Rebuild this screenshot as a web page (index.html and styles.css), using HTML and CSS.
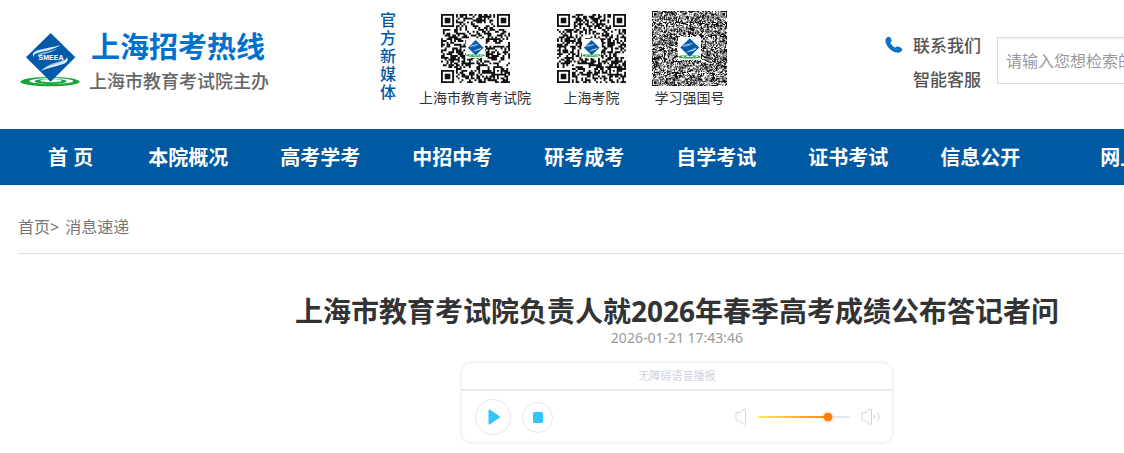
FILE: index.html
```html
<!DOCTYPE html>
<html lang="zh-CN">
<head>
<meta charset="utf-8">
<title>上海招考热线</title>
<link rel="stylesheet" href="styles.css">
</head>
<body>
<svg class="defs" aria-hidden="true">
  <symbol id="emblem" viewBox="60 98 180 166">
    <ellipse cx="150" cy="246" rx="89" ry="14" fill="#18a53a"/>
    <ellipse cx="154" cy="244" rx="66" ry="9" fill="#fff"/>
    <ellipse cx="152" cy="245" rx="48" ry="8" fill="#18a53a"/>
    <ellipse cx="153" cy="243" rx="32" ry="5" fill="#fff"/>
    <path d="M152 100 226 173 152 246 78 173Z" fill="#0459a9"/>
    <path d="M181 136C160 143 139 145 116 151c-14 4-22 12-14 21 -2-8 7-11 18-14 23-6 45-10 61-22Z" fill="#d9ecfa"/>
    <path d="M172 146c-16 8-34 10-50 15-8 3-11 6-9 10 4-5 12-6 20-8 15-3 29-8 39-17Z" fill="#8fbfe4"/>
    <path d="M122 214c20-9 42-12 65-20 15-5 20-13 13-22 0 9-9 11-20 14-23 6-44 14-58 28Z" fill="#d9ecfa"/>
    <path d="M135 205c16-9 34-11 48-17 8-4 9-7 7-10-5 6-12 7-20 10-14 4-27 9-35 17Z" fill="#8fbfe4"/>
  </symbol>
</svg>

<header class="header">
  <a class="brand" href="#">
    <svg class="brand-mark" viewBox="0 0 60 56">
      <use href="#emblem" width="60" height="56"/>
      <text class="emblem-text" x="31" y="28" text-anchor="middle">SMEEA</text>
    </svg>
    <span class="brand-copy">
      <span class="brand-name">上海招考热线</span>
      <span class="brand-host">上海市教育考试院主办</span>
    </span>
  </a>

  <section class="media">
    <h2 class="media-title">官方新媒体</h2>
    <figure class="code">
      <svg class="qr" data-modules="37" data-seed="17" data-inset="3"></svg>
      <figcaption>上海市教育考试院</figcaption>
    </figure>
    <figure class="code">
      <svg class="qr" data-modules="37" data-seed="91" data-inset="3"></svg>
      <figcaption>上海考院</figcaption>
    </figure>
    <figure class="code">
      <svg class="qr" data-modules="81" data-seed="53" data-inset="0"></svg>
      <figcaption>学习强国号</figcaption>
    </figure>
  </section>

  <div class="contact">
    <svg class="phone" viewBox="0 0 18 18" aria-hidden="true"><path d="M1.500 2C3-.3 5 .6 6 2.500c.8 1.600 1 2.500 0 3.600l-.6.700c.9 2 2.500 3.600 4.700 4.900l1.200-.9c1-.7 2-.4 3.200.2 1.800.9 3.400 1.900 2.700 3.300-1 2-3.400 2.700-5.700 2.200C6 15.500.8 9.500.4 4.900.3 3.600.8 2.800 1.500 2Z" fill="#0d72c4"/></svg>
    <div class="contact-links">
      <a href="#">联系我们</a>
      <a href="#">智能客服</a>
    </div>
  </div>

  <form class="search">
    <input class="search-box" type="text" aria-label="检索" placeholder="请输入您想检索的内容">
  </form>
</header>

<nav class="nav">
  <a class="nav-home" href="#">首 页</a>
  <a href="#">本院概况</a>
  <a href="#">高考学考</a>
  <a href="#">中招中考</a>
  <a href="#">研考成考</a>
  <a href="#">自学考试</a>
  <a href="#">证书考试</a>
  <a href="#">信息公开</a>
  <a class="nav-service" href="#">网上服务</a>
</nav>

<main class="content">
  <div class="crumbs"><span><a href="#">首页</a>&gt;</span><a href="#">消息速递</a></div>
  <article class="article">
    <h1 class="title">上海市教育考试院负责人就2026年春季高考成绩公布答记者问</h1>
    <time class="date" datetime="2026-01-21T17:43:46">2026-01-21 17:43:46</time>
    <section class="player">
      <div class="player-title">无障碍语音播报</div>
      <div class="player-bar">
        <button class="round play" type="button" aria-label="播放">
          <svg viewBox="0 0 12 16" width="12" height="16"><path d="M1.500 1.500v13L11 8Z" fill="#33c3ff" stroke="#33c3ff" stroke-width="2" stroke-linejoin="round"/></svg>
        </button>
        <button class="round stop" type="button" aria-label="停止">
          <svg viewBox="0 0 10 11" width="10" height="11"><rect width="10" height="11" rx="1.500" fill="#33c3ff"/></svg>
        </button>
        <div class="volume">
          <svg class="speaker" viewBox="0 0 12 18" width="12" height="18" aria-hidden="true"><path d="M1 5.500Q1 4.500 2 4.500H4L9 1.200Q10.500.8 10.500 2V15.500Q10.500 16.800 9 16.200L4.500 13H2Q1 13 1 12Z"/></svg>
          <input class="slider" type="range" min="0" max="100" value="79" aria-label="音量">
          <svg class="speaker" viewBox="0 0 20 18" width="20" height="18" aria-hidden="true"><path d="M1 5.500Q1 4.500 2 4.500H4L9 1.200Q10.500.8 10.500 2V15.500Q10.500 16.800 9 16.200L4.500 13H2Q1 13 1 12ZM13 6.500Q15 9 13 11.500M15.500 4Q20.500 9 15.500 14"/></svg>
        </div>
      </div>
    </section>
  </article>
</main>
<script src="codes.js"></script>
</body>
</html>
```

FILE: styles.css
```css
* {
  box-sizing: border-box;
}

body {
  margin: 0;
  min-width: 1354px;
  background: #fff;
  color: #333;
  font-family: "Noto Sans", "Noto Sans CJK SC", sans-serif;
}

html {
  overflow-x: hidden;
}

a {
  color: inherit;
  text-decoration: none;
}

.defs {
  position: absolute;
  width: 0;
  height: 0;
}

.header {
  display: flex;
  align-items: flex-start;
  padding: 11px 18px 19px 20px;
}

.brand {
  display: flex;
  gap: 9px;
  width: 360px;
  padding-top: 18px;
}

.brand-mark {
  width: 60px;
  height: 56px;
  margin-top: 3px;
}

.emblem-text {
  font: bold 7px "Liberation Sans", sans-serif;
  fill: #fff;
}

.brand-copy {
  display: flex;
  flex-direction: column;
}

.brand-name {
  padding-left: 2px;
  color: #0072ce;
  font-size: 29px;
  font-weight: 700;
  line-height: 36px;
}

.brand-host {
  color: #666;
  font-size: 18px;
  font-weight: 500;
  line-height: 32px;
}

.media {
  display: flex;
  gap: 23px;
}

.media-title {
  width: 16px;
  margin: 0;
  color: #0059a5;
  font-size: 16px;
  font-weight: 500;
  line-height: 18px;
}

.code {
  display: flex;
  flex-direction: column;
  align-items: center;
  margin: 0;
}

.qr {
  width: 75px;
  height: 75px;
}

.code figcaption {
  font-size: 14px;
  line-height: 24px;
}

.contact {
  display: flex;
  gap: 10px;
  margin-left: 158px;
  padding-top: 18px;
}

.phone {
  width: 18px;
  height: 18px;
  margin-top: 7px;
}

.contact-links {
  display: grid;
  color: #555;
  font-size: 17px;
  font-weight: 500;
  line-height: 34px;
}

.search {
  flex: 1;
  margin: 26px 0 0 16px;
}

.search-box {
  width: 100%;
  height: 47px;
  padding: 0 8px;
  border: 1px solid #ddd;
  box-shadow: inset 0 1px 2px #eee;
  color: #333;
  font: inherit;
  font-size: 16px;
}

.search-box::placeholder {
  color: #999;
}

.nav {
  display: flex;
  gap: 52px;
  padding: 2px 48px 0;
  background: #0059a3;
  color: #fff;
  font-size: 20px;
  font-weight: 700;
  line-height: 54px;
  white-space: nowrap;
}

.nav-home {
  margin-right: 3px;
}

.nav-service {
  margin-left: 28px;
}

.content {
  padding: 33px 18px 11px;
}

.crumbs {
  display: flex;
  gap: 6px;
  padding-bottom: 17px;
  border-bottom: 1px solid #ddd;
  color: #777;
  font-size: 16px;
  line-height: 18px;
}

.article {
  display: flex;
  flex-direction: column;
  align-items: center;
  padding-top: 39px;
}

.title {
  margin: 0;
  font-size: 28px;
  font-weight: 700;
  line-height: 36px;
}

.date {
  color: #999;
  font-size: 14px;
  line-height: 18px;
}

.player {
  width: 430px;
  margin-top: 16px;
  border-radius: 10px;
  box-shadow: 0 0 4px #ddd;
}

.player-title {
  border-bottom: 2px solid #e7ebf1;
  color: #d0d1e2;
  font-size: 11px;
  line-height: 26px;
  text-align: center;
}

.player-bar {
  display: flex;
  align-items: center;
  gap: 11px;
  padding: 8px 11px 7px 13px;
}

.round {
  display: grid;
  place-items: center;
  padding: 0;
  border: 1px solid #e7e6f2;
  border-radius: 50%;
  background: #fff;
}

.play {
  width: 36px;
  height: 36px;
  padding-left: 2px;
}

.stop {
  width: 31px;
  height: 31px;
}

.volume {
  display: flex;
  align-items: center;
  gap: 11px;
  margin-left: auto;
}

.speaker {
  fill: none;
  stroke: #d3d3df;
}

.slider {
  width: 92px;
  height: 14px;
  margin: 0;
  appearance: none;
  background: linear-gradient(90deg, #ffe95c, #ff8a00 77%, #e7e7f0 77%) center / 100% 2px no-repeat;
}

.slider::-webkit-slider-thumb {
  width: 8px;
  height: 8px;
  appearance: none;
  border-radius: 50%;
  background: #ff7e00;
  box-shadow: 0 0 3px #ff7e00;
}
```

FILE: codes.js
```js
const SVG = "http://www.w3.org/2000/svg";

function add(parent, name, attrs) {
  const el = document.createElementNS(SVG, name);
  for (const key in attrs) el.setAttribute(key, attrs[key]);
  parent.append(el);
}

document.querySelectorAll(".qr").forEach((svg) => {
  const count = Number(svg.dataset.modules);
  const inset = Number(svg.dataset.inset);
  const unit = (75 - inset * 2) / count;
  let state = Number(svg.dataset.seed);
  const random = () => {
    state = (state * 1664525 + 1013904223) % 4294967296;
    return state / 4294967296;
  };
  const ring = (x, y, cx, cy) => Math.max(Math.abs(x - cx), Math.abs(y - cy));
  const corners = [[3, 3], [count - 4, 3], [3, count - 4]];
  let path = "";
  for (let y = 0; y < count; y++) {
    for (let x = 0; x < count; x++) {
      let dark = random() < 0.52;
      for (const [cx, cy] of corners) {
        const d = ring(x, y, cx, cy);
        if (d <= 4) dark = d < 2 || d === 3;
      }
      const align = ring(x, y, count - 7, count - 7);
      if (align <= 2) dark = align !== 1;
      if (dark) path += `M${x} ${y}h1v1h-1z`;
    }
  }
  svg.setAttribute("viewBox", "0 0 75 75");
  add(svg, "path", {
    d: path,
    fill: "#111",
    transform: `translate(${inset} ${inset}) scale(${unit})`
  });
  const big = count > 40;
  const size = big ? 23 : 19;
  const start = (75 - size) / 2;
  add(svg, "rect", { x: start, y: start, width: size, height: size, rx: big ? 0 : 2, fill: "#fff" });
  add(svg, "use", { href: "#emblem", x: start, y: start, width: size, height: size });
});
```
